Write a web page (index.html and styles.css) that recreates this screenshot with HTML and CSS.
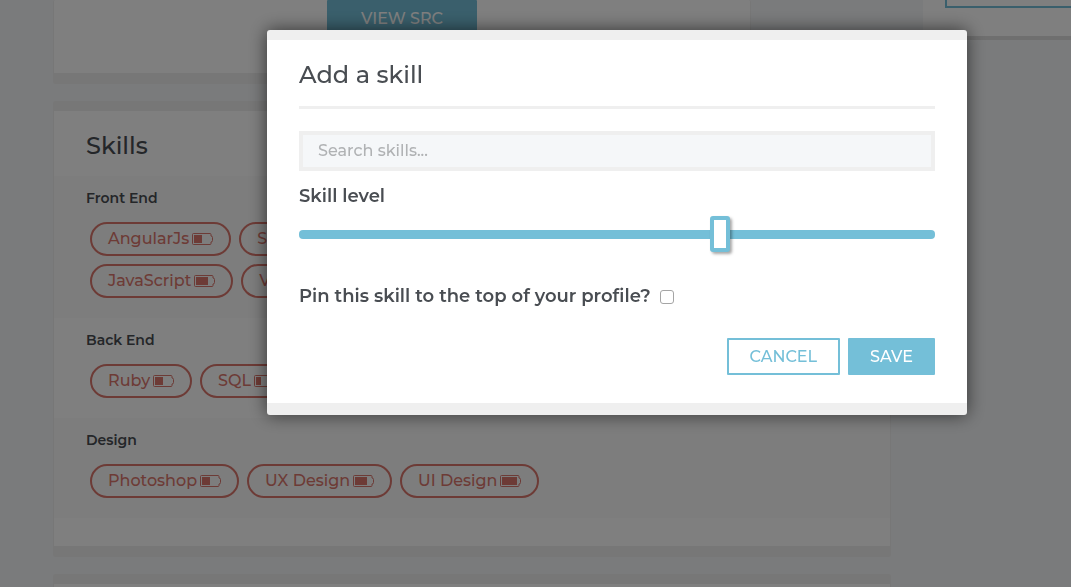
FILE: index.html
```html
<!DOCTYPE html>
<html lang="en">
<head>
<meta charset="utf-8">
<title>Add a skill</title>
<link rel="stylesheet" href="styles.css">
</head>
<body>
<svg class="sprite" aria-hidden="true">
  <symbol id="battery" viewBox="0 0 21 12">
    <path d="M1.5 .5H18Q19 .5 19 1.5V3Q20.5 3 20.5 4.5V7.5Q20.5 9 19 9V10.5Q19 11.5 18 11.5H1.5Q.5 11.5 .5 10.5V1.5Q.5 .5 1.5 .5Z" fill="none" stroke="currentColor"/>
  </symbol>
</svg>
<div class="page">
  <main class="main">
    <section class="card project">
      <a class="btn btn-solid view" href="#">VIEW SRC</a>
    </section>
    <section class="card">
      <h2 class="card-title">Skills</h2>
      <div class="group shaded">
        <h3 class="group-title">Front End</h3>
        <div class="tags">
          <span class="tag">AngularJs <svg class="battery"><use href="#battery"/><rect x="2" y="2" width="8" height="8"/></svg></span>
          <span class="tag">SASS <svg class="battery"><use href="#battery"/><rect x="2" y="2" width="12" height="8"/></svg></span>
        </div>
        <div class="tags">
          <span class="tag">JavaScript <svg class="battery"><use href="#battery"/><rect x="2" y="2" width="12" height="8"/></svg></span>
          <span class="tag">Vue <svg class="battery"><use href="#battery"/><rect x="2" y="2" width="8" height="8"/></svg></span>
        </div>
      </div>
      <div class="group">
        <h3 class="group-title">Back End</h3>
        <div class="tags">
          <span class="tag">Ruby <svg class="battery"><use href="#battery"/><rect x="2" y="2" width="8" height="8"/></svg></span>
          <span class="tag">SQL <svg class="battery"><use href="#battery"/><rect x="2" y="2" width="5" height="8"/></svg></span>
        </div>
      </div>
      <div class="group shaded">
        <h3 class="group-title">Design</h3>
        <div class="tags">
          <span class="tag">Photoshop <svg class="battery"><use href="#battery"/><rect x="2" y="2" width="8" height="8"/></svg></span>
          <span class="tag">UX Design <svg class="battery"><use href="#battery"/><rect x="2" y="2" width="12" height="8"/></svg></span>
          <span class="tag">UI Design <svg class="battery"><use href="#battery"/><rect x="2" y="2" width="15" height="8"/></svg></span>
        </div>
      </div>
      <div class="card-end"></div>
    </section>
    <section class="card"><div class="card-end"></div></section>
  </main>
  <aside class="side"><div class="side-outline"></div></aside>
</div>
<div class="overlay">
  <form class="modal" role="dialog" aria-labelledby="title">
    <h2 class="modal-title" id="title">Add a skill</h2>
    <input class="search" type="text" placeholder="Search skills..." aria-label="Search skills">
    <label class="label" for="level">Skill level</label>
    <input class="slider" id="level" type="range" min="0" max="3" value="2">
    <div class="pin">
      <label for="pin">Pin this skill to the top of your profile?</label>
      <input class="check" id="pin" type="checkbox">
    </div>
    <div class="actions">
      <button class="btn btn-outline" type="button">CANCEL</button>
      <button class="btn btn-solid" type="button">SAVE</button>
    </div>
  </form>
</div>
</body>
</html>
```
FILE: styles.css
```css
* { box-sizing: border-box; }
body {
  margin: 0;
  background: #f5f7f9;
  color: #494d52;
  font: 500 16px/24px Montserrat, Inter, sans-serif;
}
h2, h3 { margin: 0; }
.sprite { position: absolute; width: 0; height: 0; }

.page {
  display: flex;
  gap: 32px;
  align-items: flex-start;
  height: 100vh;
  padding-left: 53px;
  overflow: hidden;
}
.main { display: flex; flex: 1; flex-direction: column; gap: 17px; }
.card {
  background: #fff;
  border: 1px solid #efefef;
  border-top-width: 10px;
  border-bottom-width: 11px;
  border-radius: 2px;
}
.project {
  display: flex;
  justify-content: center;
  margin-right: 140px;
  padding-bottom: 36px;
  border-top: 0;
}
.view { width: 150px; }
.card-title { padding: 19px 32px 14px; font-size: 24px; font-weight: 500; line-height: 32px; }
.group { padding: 10px 32px 20px; }
.shaded { background: #fafafa; }
.group-title { margin-bottom: 12px; font-size: 14px; font-weight: 600; }
.tags { display: flex; gap: 8px; padding-left: 4px; }
.tags + .tags { margin-top: 8px; }
.tag {
  display: flex;
  align-items: center;
  gap: 3px;
  height: 34px;
  padding: 0 16px;
  border: 2px solid #da766c;
  border-radius: 17px;
  color: #da766c;
  font-size: 16px;
}
.battery { width: 21px; height: 12px; fill: currentColor; }
.card-end { height: 28px; }

.side {
  width: 148px;
  padding: 0 0 28px 22px;
  background: #fff;
  border-bottom: 4px solid #dedede;
}
.side-outline { height: 8px; border: solid #74bfd8; border-width: 0 0 2px 2px; }

.btn {
  height: 37px;
  padding: 0 20px;
  border: 2px solid #74bfd8;
  border-radius: 1px;
  font: inherit;
  line-height: 33px;
  text-align: center;
  text-decoration: none;
}
.btn-solid { background: #74bfd8; color: #fff; }
.btn-outline { padding: 0 21px; background: #fff; color: #74bfd8; }

.overlay {
  position: fixed;
  inset: 0;
  padding: 30px 104px 0 267px;
  background: rgba(0, 0, 0, .5);
}
.modal {
  display: flex;
  flex-direction: column;
  padding: 19px 32px 28px;
  background: #fff;
  border: solid #efefef;
  border-width: 10px 0 12px;
  border-radius: 3px;
  box-shadow: 0 0 18px rgba(0, 0, 0, .6);
}
.modal-title {
  padding-bottom: 15px;
  border-bottom: 3px solid #efefef;
  font-size: 24px;
  font-weight: 500;
  line-height: 32px;
}
.search {
  height: 40px;
  margin-top: 22px;
  padding: 0 15px 2px;
  border: 4px solid #efefef;
  background: #f5f7f9;
  color: inherit;
  font: inherit;
}
.search::placeholder { color: #b0b2b4; }
.label, .pin { font-size: 18px; font-weight: 600; }
.label { margin-top: 13px; }
.slider {
  appearance: none;
  height: 36px;
  margin: 8px 0 0;
  background: none;
}
.slider::-webkit-slider-runnable-track { height: 9px; border-radius: 4px; background: #74bfd8; }
.slider::-webkit-slider-thumb {
  appearance: none;
  width: 20px;
  height: 36px;
  margin-top: -14px;
  border: 4px solid #74bfd8;
  border-radius: 3px;
  background: #fff;
  box-shadow: 2px 2px 3px rgba(0, 0, 0, .35);
}
.pin { display: flex; align-items: center; gap: 9px; margin-top: 32px; }
.check {
  appearance: none;
  width: 14px;
  height: 14px;
  margin: 2px 0 0;
  border: 1px solid #a5a5a5;
  border-radius: 3px;
  background: #fff;
}
.check:checked { background: #74bfd8; }
.actions { display: flex; justify-content: flex-end; gap: 8px; margin-top: 30px; }
```
